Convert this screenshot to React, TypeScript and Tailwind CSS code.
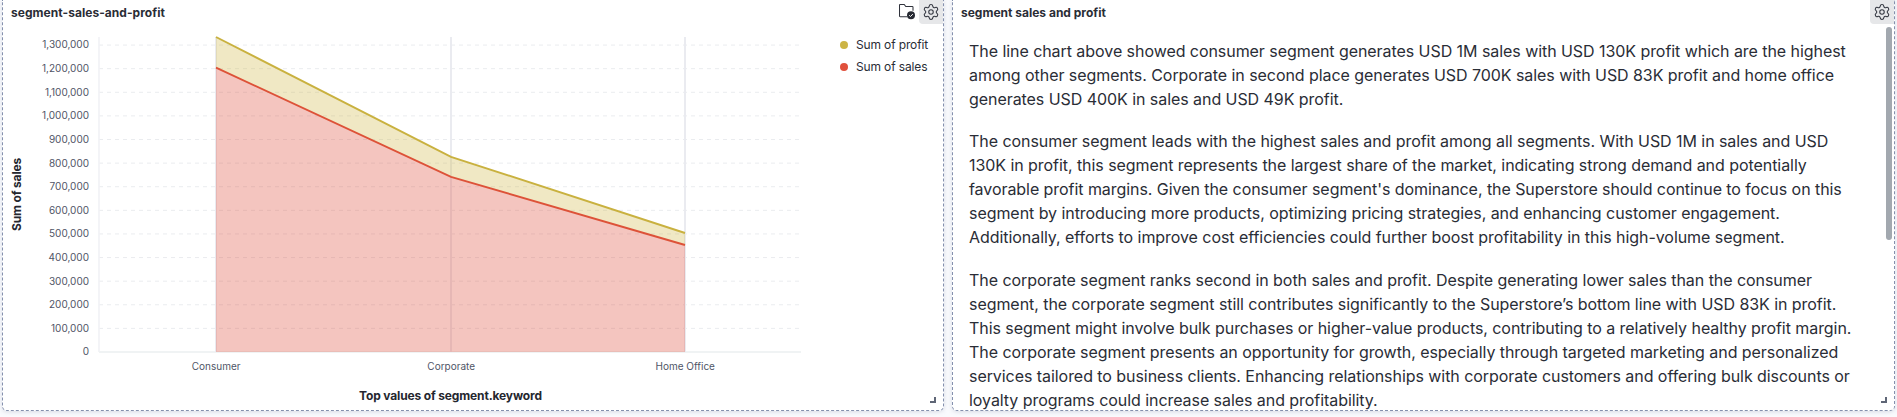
import React from "react";
import { Settings } from "lucide-react";

const X0 = 99;
const X1 = 801;
const BASE = 352;
const TOP = 37;
const STEP = 23.61;
const points = [
  { label: "Consumer", x: 216, profit: 37, sales: 67.6 },
  { label: "Corporate", x: 451, profit: 156.8, sales: 176.8 },
  { label: "Home Office", x: 685, profit: 233, sales: 245 },
];
const ticks = Array.from({ length: 14 }, (_, i) => i);

const line = (key: "profit" | "sales") => points.map((p) => `${p.x},${p[key]}`).join(" ");
const back = (key: "profit" | "sales") =>
  [...points].reverse().map((p) => `${p.x},${p[key]}`).join(" ");

function Chart() {
  return (
    <svg width="830" height="386" viewBox="3 24 830 386" className="block shrink-0">
      <g stroke="#eaecef" strokeWidth="1">
        {ticks.map((i) => (
          <line key={i} x1={X0} x2={X1 - 2} y1={BASE - i * STEP} y2={BASE - i * STEP} strokeDasharray="4 4" />
        ))}
      </g>
      <line x1={X0} x2={X0} y1={TOP} y2={BASE} stroke="#f1f2f5" strokeWidth="1.6" />
      <line x1={X0} x2={X1} y1={BASE} y2={BASE} stroke="#f0f3f4" strokeWidth="1.8" />
      {points.map((p) => (
        <line key={p.label} x1={p.x} x2={p.x} y1={TOP} y2={BASE} stroke="#eaebf0" strokeWidth="2" />
      ))}
      <polygon points={`${line("profit")} ${back("sales")}`} fill="#ccb43b" fillOpacity="0.3" />
      <polygon points={`${line("sales")} 685,352 216,352`} fill="#dd4a38" fillOpacity="0.32" />
      <polyline points={line("profit")} fill="none" stroke="#c9b13f" strokeWidth="1.9" />
      <polyline points={line("sales")} fill="none" stroke="#dd5238" strokeWidth="1.9" />
      <g className="font-['Inter',sans-serif] text-[10px]" fill="#4f5566">
        {ticks.map((i) => (
          <text key={i} x="89" y={BASE - i * STEP + 3.4} textAnchor="end">
            {(i * 100000).toLocaleString("en-US")}
          </text>
        ))}
        {points.map((p) => (
          <text key={p.label} x={p.x + 0.2} y="370" textAnchor="middle">
            {p.label}
          </text>
        ))}
      </g>
      <g className="font-['Inter',sans-serif] text-[12px] font-bold tracking-[-0.15px]" fill="#25272f">
        <text x="450.5" y="400" textAnchor="middle">Top values of segment.keyword</text>
        <text transform="translate(21 194.5) rotate(-90)" textAnchor="middle">Sum of sales</text>
      </g>
    </svg>
  );
}

function FolderCheck() {
  return (
    <svg width="16" height="16" viewBox="0 0 16 16" className="block">
      <path d="M8.2 12.7H1.2a.7.7 0 0 1-.7-.7V1.2c0-.4.3-.7.7-.7h4l1.6 2h6.5c.4 0 .7.3.7.7v3.500" fill="none" stroke="#30333c" strokeWidth="1.05" />
      <circle cx="12" cy="11.2" r="4" fill="#272a33" />
      <path d="m10.2 11.3 1.3 1.2 2.3-2.4" fill="none" stroke="#fff" strokeWidth="1" />
    </svg>
  );
}

function GearButton() {
  return (
    <button className="flex size-6 items-center justify-center rounded-bl-[4px] bg-[#e6e7e9] text-[#343741]" aria-label="Panel options">
      <Settings size={18} strokeWidth={1.4} />
    </button>
  );
}

function Handle() {
  return <span className="absolute right-[7px] bottom-[7px] size-[6px] border-r-2 border-b-2 border-[#5f6676]" />;
}

const frame =
  "relative flex h-[411px] flex-col overflow-hidden rounded-b-[5px] border border-t-0 border-dashed border-[#8490ad] bg-white shadow-[0_1px_4px_rgba(105,112,145,0.22)]";

const paragraphs = [
  [
    "The line chart above showed consumer segment generates USD 1M sales with USD 130K profit which are the highest",
    "among other segments. Corporate in second place generates USD 700K sales with USD 83K profit and home office",
    "generates USD 400K in sales and USD 49K profit.",
  ],
  [
    "The consumer segment leads with the highest sales and profit among all segments. With USD 1M in sales and USD",
    "130K in profit, this segment represents the largest share of the market, indicating strong demand and potentially",
    "favorable profit margins. Given the consumer segment's dominance, the Superstore should continue to focus on this",
    "segment by introducing more products, optimizing pricing strategies, and enhancing customer engagement.",
    "Additionally, efforts to improve cost efficiencies could further boost profitability in this high-volume segment.",
  ],
  [
    "The corporate segment ranks second in both sales and profit. Despite generating lower sales than the consumer",
    "segment, the corporate segment still contributes significantly to the Superstore’s bottom line with USD 83K in profit.",
    "This segment might involve bulk purchases or higher-value products, contributing to a relatively healthy profit margin.",
    "The corporate segment presents an opportunity for growth, especially through targeted marketing and personalized",
    "services tailored to business clients. Enhancing relationships with corporate customers and offering bulk discounts or",
    "loyalty programs could increase sales and profitability.",
  ],
];

export default function App() {
  return (
    <div className="flex h-[417px] w-[1897px] gap-2 overflow-hidden bg-[#f9fafd] pl-[2px] font-['Inter',sans-serif] text-[#2a2d36]">
      <section className={`${frame} w-[942px]`}>
        <header className="flex h-6 shrink-0 items-center pl-2">
          <h2 className="flex-1 pt-[2px] text-xs leading-6 font-bold tracking-[0.04px]">segment-sales-and-profit</h2>
          <span className="mr-1 flex size-4">
            <FolderCheck />
          </span>
          <GearButton />
        </header>
        <div className="flex">
          <Chart />
          <ul className="flex flex-col pt-[10px] pl-[7px] text-xs tracking-[-0.14px]">
            <li className="flex h-[22px] items-center gap-2 whitespace-nowrap">
              <i className="size-2 rounded-full bg-[#ccb445]" />
              Sum of profit
            </li>
            <li className="flex h-[22px] items-center gap-2 whitespace-nowrap">
              <i className="size-2 rounded-full bg-[#e0503c]" />
              Sum of sales
            </li>
          </ul>
        </div>
        <Handle />
      </section>
      <section className={`${frame} w-[943px]`}>
        <header className="flex h-6 shrink-0 items-center pl-2">
          <h2 className="flex-1 pt-[2px] text-xs leading-6 font-bold">segment sales and profit</h2>
          <GearButton />
        </header>
        <div className="flex min-h-0 flex-1 overflow-hidden">
          <div className="flex flex-1 flex-col gap-[18.29px] pt-[15px] pl-4 text-base leading-6 tracking-[-0.058px]">
            {paragraphs.map((lines, i) => (
              <p key={i}>
                {lines.map((text) => (
                  <span key={text} className="block whitespace-nowrap">
                    {text}
                  </span>
                ))}
              </p>
            ))}
          </div>
          <div className="mt-[3px] mr-[2px] h-[213px] w-[6px] rounded-full bg-[#a2a8af]" />
        </div>
        <Handle />
      </section>
    </div>
  );
}
